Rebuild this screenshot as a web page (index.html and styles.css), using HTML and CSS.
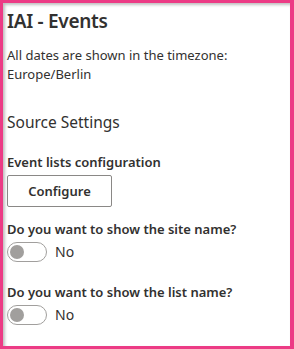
FILE: index.html
```html
<!DOCTYPE html>
<html lang="en">
<head>
    <meta charset="UTF-8">
    <meta name="viewport" content="width=device-width, initial-scale=1.0">
    <title>IAI - Events</title>
    <link rel="stylesheet" href="styles.css">
</head>
<body>
    <div class="frame">
        <div class="panel">
            <h1 class="title">IAI - Events</h1>
            <p class="note">All dates are shown in the timezone: Europe/Berlin</p>

            <h2 class="group-title">Source Settings</h2>

            <div class="field">
                <label class="field-label">Event lists configuration</label>
                <button class="btn">Configure</button>
            </div>

            <div class="field field-toggle">
                <label class="field-label">Do you want to show the site name?</label>
                <div class="toggle-row">
                    <span class="toggle"><span class="knob"></span></span>
                    <span class="toggle-text">No</span>
                </div>
            </div>

            <div class="field field-toggle">
                <label class="field-label">Do you want to show the list name?</label>
                <div class="toggle-row">
                    <span class="toggle"><span class="knob"></span></span>
                    <span class="toggle-text">No</span>
                </div>
            </div>
        </div>
    </div>
</body>
</html>
```

FILE: styles.css
```css
html, body {
    margin: 0;
    height: 100%;
}

body {
    font-family: 'Noto Sans', 'Open Sans', sans-serif;
    color: #323130;
    background: #fff;
}

.frame {
    box-sizing: border-box;
    height: 349px;
    width: 294px;
    border: 3px solid #ec3b85;
    border-right-width: 4px;
    background: #fff;
    box-shadow: inset 2px 2px 3px rgba(0, 0, 0, 0.25);
}

.panel {
    padding: 4px 8px 0 4px;
}

.title {
    margin: 0;
    font-size: 19px;
    letter-spacing: -0.3px;
    font-weight: 600;
    line-height: 28px;
}

.note {
    margin: 11px 0 0;
    font-size: 13px;
    line-height: 19px;
}

.group-title {
    margin: 27px 0 0;
    font-size: 15.5px;
    font-weight: 400;
    line-height: 22px;
}

.field {
    margin-top: 19px;
}

.field + .field {
    margin-top: 12px;
}

.field-toggle {
    padding-bottom: 8px;
}

.field-label {
    display: block;
    font-size: 13px;
    font-weight: 600;
    line-height: 20px;
    padding-bottom: 3px;
}

.btn {
    font-family: inherit;
    font-size: 13px;
    font-weight: 600;
    color: #323130;
    background: #fff;
    border: 1px solid #8a8886;
    border-radius: 2px;
    width: 105px;
    height: 32px;
    padding: 0;
}

.toggle-row {
    display: flex;
    align-items: center;
    gap: 8px;
}

.toggle {
    box-sizing: border-box;
    display: flex;
    align-items: center;
    width: 40px;
    height: 20px;
    border: 1px solid #a19f9d;
    border-radius: 10px;
    padding-left: 2px;
}

.knob {
    width: 14px;
    height: 14px;
    border-radius: 50%;
    background: #a19f9d;
}

.toggle-text {
    font-size: 14px;
    line-height: 20px;
}
```
